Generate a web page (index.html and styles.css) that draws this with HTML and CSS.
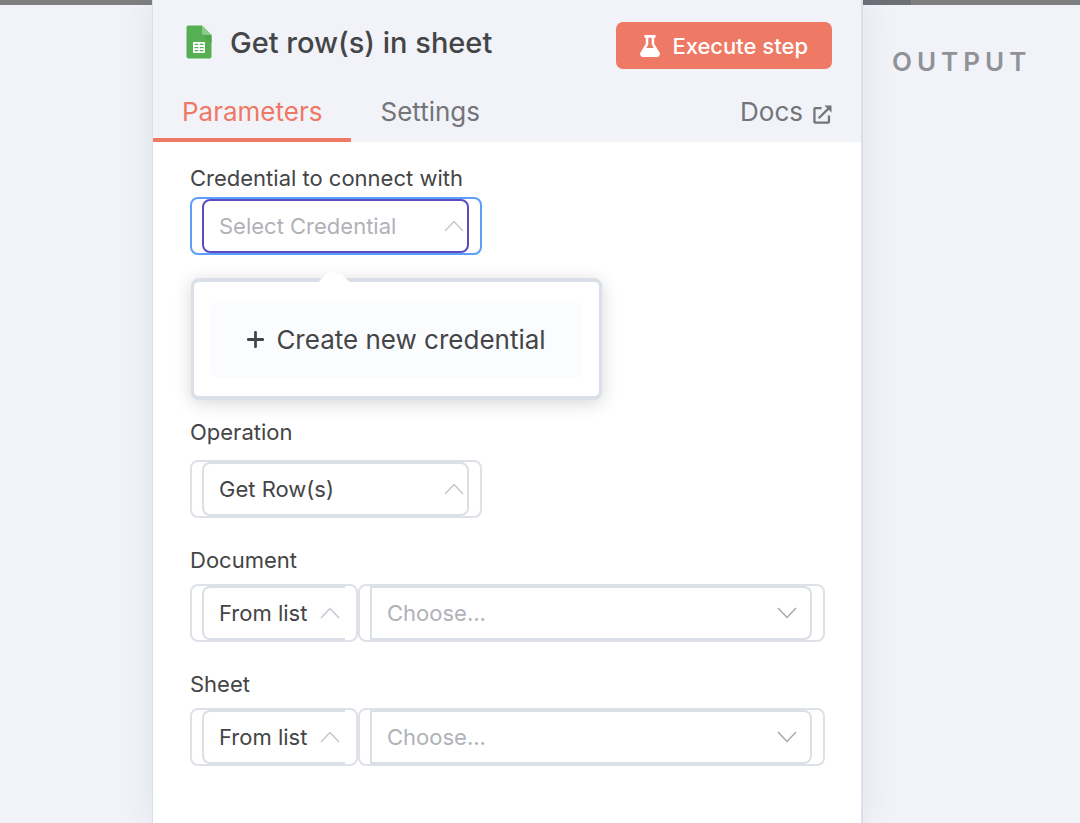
FILE: index.html
```html
<!DOCTYPE html>
<html lang="en">
<head>
<meta charset="utf-8">
<title>Get row(s) in sheet</title>
<link rel="stylesheet" href="styles.css">
</head>
<body>
<div class="view">
  <div class="input-pane"></div>
  <main class="panel">
    <header class="panel-header">
      <div class="title-row">
        <svg class="sheet-icon" viewBox="0 0 26 34" aria-hidden="true">
          <path d="M2 0.500H16L25.500 10V31.500a2 2 0 0 1-2 2H2.500a2 2 0 0 1-2-2V2.500a2 2 0 0 1 2-2z" fill="#56b053"/>
          <path d="M16 10h9.500v8z" fill="#50a650"/>
          <path d="M16 0.500L25.500 10H18a2 2 0 0 1-2-2z" fill="#8bcb89"/>
          <rect x="7" y="17" width="12" height="11" rx="1" fill="#fff"/>
          <path d="M8.500 18.800h3.700v1.300H8.500zM13.700 18.800h3.800v1.300h-3.800zM8.500 21.900h3.700v1.300H8.500zM13.700 21.900h3.800v1.300h-3.800zM8.500 25h3.700v1.300H8.500zM13.700 25h3.800v1.300h-3.800z" fill="#56b053"/>
        </svg>
        <h1 class="title">Get row(s) in sheet</h1>
        <button class="execute" type="button">
          <svg class="flask" viewBox="0 0 20 22" aria-hidden="true">
            <path fill-rule="evenodd" d="M4.500 0h11v2.800h-1.300v6l5.300 8.700c1.200 2-.2 4.500-2.500 4.500H3C.7 22-.7 19.500.5 17.500L5.800 8.800v-6H4.500zM8.300 2.800v6.700L6.300 13h7.400l-2-3.500V2.800z" fill="#fff"/>
          </svg>
          Execute step
        </button>
      </div>
      <nav class="tabs">
        <a class="tab active" href="#parameters">Parameters</a>
        <a class="tab" href="#settings">Settings</a>
        <a class="tab docs" href="#docs">Docs
          <svg class="external" viewBox="0 0 20 20" fill="none" stroke="currentColor" stroke-width="2.400" aria-hidden="true">
            <path d="M9 3.200H2.500a1 1 0 0 0-1 1V17.500a1 1 0 0 0 1 1H15.800a1 1 0 0 0 1-1V11"/>
            <path d="M6 14L17 3"/>
            <path d="M12 .5h7.500V8z" fill="currentColor" stroke="none"/>
          </svg>
        </a>
      </nav>
    </header>

    <form class="fields">
      <div class="field field-credential">
        <label class="label" for="credential">Credential to connect with</label>
        <div class="anchor">
          <div class="outer short focused">
            <div class="inner">
              <input class="control" id="credential" type="text" placeholder="Select Credential" readonly>
              <svg class="chevron" viewBox="0 0 20 12" aria-hidden="true"><path d="M1 11L10 1.500L19 11"/></svg>
            </div>
          </div>
          <div class="popover">
            <svg class="arrow" viewBox="0 0 34 16" aria-hidden="true"><path d="M0 13L12 1.500L18 7L21 5L33 16H3z"/></svg>
            <button class="create" type="button">
              <svg class="plus" viewBox="0 0 16 16" aria-hidden="true"><path d="M8 1.200V14.800M1.200 8H14.800"/></svg>
              Create new credential
            </button>
          </div>
        </div>
      </div>

      <div class="field field-operation">
        <label class="label" for="operation">Operation</label>
        <div class="outer short">
          <div class="inner">
            <select class="control" id="operation"><option>Get Row(s)</option></select>
            <svg class="chevron" viewBox="0 0 20 12" aria-hidden="true"><path d="M1 11L10 1.500L19 11"/></svg>
          </div>
        </div>
      </div>

      <div class="field field-locator">
        <label class="label" for="document">Document</label>
        <div class="locator">
          <div class="outer mode">
            <div class="inner">
              <select class="control" aria-label="Document mode"><option>From list</option></select>
              <svg class="chevron" viewBox="0 0 20 12" aria-hidden="true"><path d="M1 11L10 1.500L19 11"/></svg>
            </div>
          </div>
          <div class="outer value">
            <div class="inner">
              <input class="control" id="document" type="text" placeholder="Choose..." readonly>
              <svg class="chevron dark" viewBox="0 0 20 12" aria-hidden="true"><path d="M1 1L10 10.500L19 1"/></svg>
            </div>
          </div>
        </div>
      </div>

      <div class="field field-locator">
        <label class="label" for="sheet">Sheet</label>
        <div class="locator">
          <div class="outer mode">
            <div class="inner">
              <select class="control" aria-label="Sheet mode"><option>From list</option></select>
              <svg class="chevron" viewBox="0 0 20 12" aria-hidden="true"><path d="M1 11L10 1.500L19 11"/></svg>
            </div>
          </div>
          <div class="outer value">
            <div class="inner">
              <input class="control" id="sheet" type="text" placeholder="Choose..." readonly>
              <svg class="chevron dark" viewBox="0 0 20 12" aria-hidden="true"><path d="M1 1L10 10.500L19 1"/></svg>
            </div>
          </div>
        </div>
      </div>
    </form>
  </main>
  <aside class="output-pane">
    <div class="output-strip"></div>
    <h2 class="output-title">OUTPUT</h2>
  </aside>
</div>
</body>
</html>
```
FILE: styles.css
```css
* {
  box-sizing: border-box;
}

body {
  margin: 0;
  background: #f1f3f9;
  color: #444546;
  font-family: Inter, "Liberation Sans", sans-serif;
  font-size: 22px;
}

.view {
  display: grid;
  grid-template-columns: 152px minmax(0, 1fr) 217px;
  min-height: 100vh;
}

.input-pane {
  border-top: 5px solid #7f7f7f;
}

.panel {
  z-index: 1;
  background: #fff;
  border: solid #dbdfe7;
  border-width: 0 2px 0 1px;
  box-shadow: 0 0 32px rgba(68, 71, 84, 0.1);
}

.panel-header {
  display: flex;
  flex-direction: column;
  height: 142px;
  background: #f1f3f9;
}

.title-row {
  display: flex;
  align-items: flex-start;
  padding: 22px 29px 0 33px;
}

.sheet-icon {
  width: 26px;
  height: 34px;
  margin: 3px 18px 0 0;
}

.title {
  flex: 1;
  margin: 0;
  font-size: 29px;
  font-weight: 500;
  line-height: 42px;
}

.execute {
  display: flex;
  align-items: center;
  gap: 12px;
  height: 47px;
  padding: 0 24px;
  border: 0;
  border-radius: 7px;
  background: #ee7964;
  color: #fff;
  font: 500 22px Inter, "Liberation Sans", sans-serif;
}

.flask {
  width: 20px;
  height: 22px;
}

.tabs {
  display: flex;
  flex: 1;
  align-items: stretch;
}

.tab {
  padding: 27px 29px 0;
  border-bottom: 4px solid transparent;
  color: #737579;
  font-size: 26px;
  font-weight: 400;
  line-height: 32px;
  text-decoration: none;
}

.tab.active {
  border-color: #ee7964;
  color: #ee7964;
}

.docs {
  display: flex;
  gap: 10px;
  margin-left: auto;
}

.external {
  width: 19px;
  height: 19px;
  margin-top: 9px;
}

.fields {
  padding: 21px 36px 0 37px;
}

.label {
  display: block;
  line-height: 30px;
}

.field-credential .label {
  margin-bottom: 4px;
}

.field-operation {
  margin-top: 162px;
}

.field-operation .label {
  margin-bottom: 13px;
}

.field-locator {
  margin-top: 27px;
}

.field-locator .label {
  margin-bottom: 9px;
}

.anchor {
  position: relative;
}

.outer {
  height: 58px;
  padding: 0 11px 0 10px;
  border: 2px solid #dfe1e9;
  border-radius: 8px;
}

.short {
  width: 292px;
}

.inner {
  position: relative;
  height: 54px;
  border: 2px solid #dbdfe7;
  border-radius: 8px;
}

.focused {
  border-color: #5c9ffa;
}

.focused .inner {
  border-color: #5a4cc2;
}

.control {
  width: 100%;
  height: 100%;
  padding: 0 32px 0 15px;
  border: 0;
  outline: 0;
  appearance: none;
  background: transparent;
  color: #444546;
  font: 22px Inter, "Liberation Sans", sans-serif;
}

.control::placeholder {
  color: #b0b2b8;
  opacity: 1;
}

.chevron {
  position: absolute;
  top: 19px;
  right: 3px;
  width: 20px;
  height: 12px;
  fill: none;
  stroke: #c6c7cf;
  stroke-width: 1.5;
  pointer-events: none;
}

.chevron.dark {
  stroke: #a8a9b0;
}

.locator {
  display: flex;
}

.mode {
  width: 168px;
}

.mode .inner {
  border-right: 0;
  border-radius: 8px 0 0 8px;
}

.mode .chevron {
  right: 5px;
}

.value {
  flex: 1;
}

.value .inner {
  border-radius: 0 8px 8px 0;
}

.value .chevron {
  right: 13px;
}

.popover {
  position: absolute;
  z-index: 2;
  top: 81px;
  left: 1px;
  width: 411px;
  padding: 19px 17px 18px;
  border: 4px solid #dbdfe7;
  border-width: 4px 3px;
  border-radius: 8px;
  background: #fff;
  box-shadow: 0 3px 18px rgba(0, 0, 0, 0.16);
}

.arrow {
  position: absolute;
  top: -14px;
  left: 125px;
  width: 34px;
  height: 16px;
  fill: #fff;
}

.create {
  display: flex;
  align-items: center;
  justify-content: center;
  gap: 12px;
  width: 100%;
  height: 77px;
  padding: 0;
  border: 0;
  border-radius: 7px;
  background: #fbfcfe;
  color: #444546;
  font: 400 26px Inter, "Liberation Sans", sans-serif;
}

.plus {
  width: 17px;
  height: 17px;
  fill: none;
  stroke: #444546;
  stroke-width: 2.6;
  stroke-linecap: round;
}

.output-strip {
  height: 5px;
  background: linear-gradient(to right, #6e7078 48px, #7f7f7f 48px);
}

.output-title {
  margin: 40px 0 0 29px;
  color: #909298;
  font-size: 26px;
  font-weight: 600;
  line-height: 34px;
  letter-spacing: 5px;
}
```
